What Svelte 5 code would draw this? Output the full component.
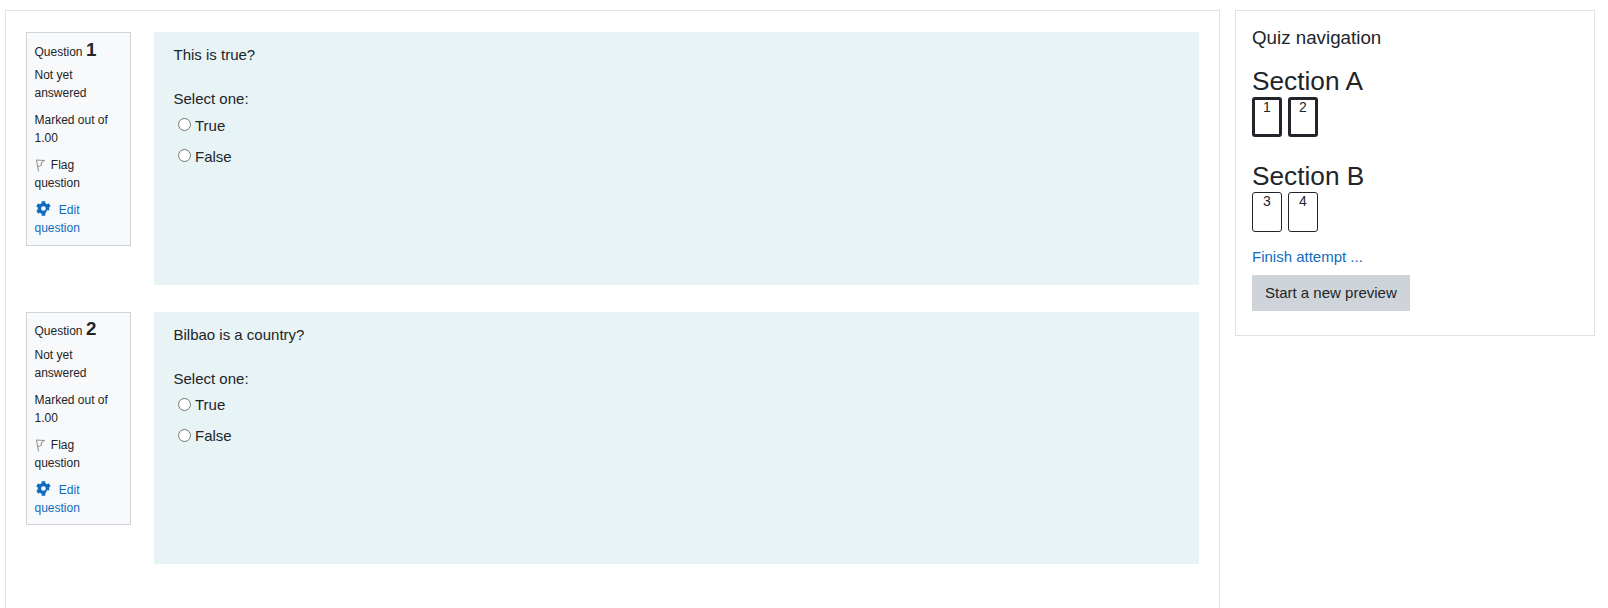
<script>
    const questions = [
        { number: 1, text: "This is true?" },
        { number: 2, text: "Bilbao is a country?" },
    ];
    const sections = [
        { title: "Section A", current: true, pages: [1, 2] },
        { title: "Section B", current: false, pages: [3, 4] },
    ];
</script>

<div class="page">
    <div class="main-box">
        {#each questions as q}
            <div class="question">
                <div class="info">
                    <div class="qno">Question <span>{q.number}</span></div>
                    <div class="state">Not yet answered</div>
                    <div class="grade">Marked out of 1.00</div>
                    <div class="flag">
                        <svg width="12" height="14" viewBox="0 0 12 14">
                            <path d="M3.5 13.5 1.5 2 9.5 2.5 6 5 6.5 7.5 3 8.5" fill="none" stroke="#8f8f8f" stroke-width="1" />
                        </svg>
                        Flag question
                    </div>
                    <a class="edit" href="#edit">
                        <svg class="gear" width="15" height="15" viewBox="0 0 512 512">
                            <path fill="#0f6cbf" d="M487 316l-43-25a194 194 0 0 0 0-70l43-25c5-3 7-9 5-14a251 251 0 0 0-55-96c-4-4-10-5-15-2l-43 25a190 190 0 0 0-61-35V24c0-6-4-11-9-12a253 253 0 0 0-110 0c-5 1-9 6-9 12v50a196 196 0 0 0-61 35L86 84c-5-3-11-2-15 2a249 249 0 0 0-55 96c-2 5 0 11 5 14l43 25a194 194 0 0 0 0 70l-43 25c-5 3-7 9-5 14a251 251 0 0 0 55 96c4 4 10 5 15 2l43-25a190 190 0 0 0 61 35v50c0 6 4 11 9 12a253 253 0 0 0 110 0c5-1 9-6 9-12v-50a196 196 0 0 0-61-35l43 25c5 3 11 2 15-2a249 249 0 0 0 55-96c2-5 0-11-5-14zM254 336a80 80 0 1 1 0-160 80 80 0 0 1 0 160z" />
                        </svg>
                        Edit question
                    </a>
                </div>
                <div class="content">
                    <p class="qtext">{q.text}</p>
                    <div class="prompt">Select one:</div>
                    <label class="answer"><input type="radio" name="q{q.number}" /> True</label>
                    <label class="answer"><input type="radio" name="q{q.number}" /> False</label>
                </div>
            </div>
        {/each}
    </div>

    <div class="side-box">
        <h5>Quiz navigation</h5>
        {#each sections as s}
            <h3>{s.title}</h3>
            <div class="buttons" class:current={s.current}>
                {#each s.pages as p}
                    <div class="qnbutton">{p}</div>
                {/each}
            </div>
        {/each}
        <a class="finish" href="#finish">Finish attempt ...</a>
        <button class="preview">Start a new preview</button>
    </div>
</div>

<style>
    :global(body) {
        margin: 0;
        overflow: hidden;
        background: #fff;
        font-family: "Liberation Sans", Arial, sans-serif;
        color: #212529;
    }

    .page {
        display: flex;
        align-items: flex-start;
        column-gap: 15px;
        padding: 10px 0 0 5px;
        height: 598px;
        overflow: hidden;
    }

    .main-box {
        width: 1215px;
        height: 640px;
        box-sizing: border-box;
        flex: none;
        padding: 21px 20px 0;
        border: 1px solid #dee2e6;
    }

    .question {
        display: flex;
        align-items: flex-start;
        column-gap: 23px;
        margin-bottom: 27px;
    }

    .info {
        width: 105px;
        flex: none;
        box-sizing: border-box;
        padding: 6.8px 7.5px 7.6px;
        background: #f8f9fa;
        border: 1px solid #ced4da;
        font-size: 12px;
        line-height: 18px;
    }

    .info > div {
        margin-bottom: 7px;
    }

    .info > .qno {
        margin-bottom: 5.2px;
    }

    .info > .state {
        margin-bottom: 9px;
    }

    .info > .grade {
        margin-bottom: 9px;
    }

    .info > .flag {
        margin-bottom: 9px;
    }

    .qno span {
        font-size: 18.75px;
        font-weight: bold;
        line-height: 20px;
    }

    .flag svg {
        vertical-align: -3px;
        margin-right: 1px;
    }

    .edit {
        display: block;
        color: #0f6cbf;
        text-decoration: none;
    }

    .gear {
        vertical-align: -2px;
        margin: 0 5px 0 1px;
    }

    .content {
        flex: 1;
        height: 252.6px;
        box-sizing: border-box;
        padding: 14px 19.5px 0;
        background: #e7f3f5;
        font-size: 15px;
        line-height: 18px;
    }

    .qtext {
        margin: 0 0 26px;
    }

    .prompt {
        margin-bottom: 2.4px;
    }

    .answer {
        display: flex;
        align-items: center;
        column-gap: 4px;
        height: 31px;
        padding-left: 4.5px;
    }

    .answer input {
        width: 13px;
        height: 13px;
        margin: 0 0 2px;
    }

    .side-box {
        width: 360px;
        flex: none;
        box-sizing: border-box;
        padding: 16px 16px 24px;
        border: 1px solid #dee2e6;
    }

    h5 {
        margin: 0 0 17px;
        font-size: 18.75px;
        font-weight: normal;
        line-height: 22px;
    }

    h3 {
        margin: 0;
        font-size: 26.25px;
        font-weight: normal;
        line-height: 31px;
    }

    .buttons {
        display: flex;
        column-gap: 6px;
        margin-bottom: 24px;
    }

    .qnbutton {
        width: 30px;
        height: 40px;
        box-sizing: border-box;
        border: 1px solid #212529;
        border-radius: 3px;
        font-size: 14px;
        line-height: 16px;
        text-align: center;
    }

    .current .qnbutton {
        border-width: 3px;
        line-height: 14px;
    }

    .finish {
        display: block;
        margin: -10px 0 7px;
        color: #0f6cbf;
        font-size: 15px;
        line-height: 22px;
        text-decoration: none;
    }

    .preview {
        display: block;
        height: 36px;
        padding: 0 13px 1px;
        border: 0;
        background: #ced4da;
        color: #212529;
        font-family: inherit;
        font-size: 15px;
    }
</style>
